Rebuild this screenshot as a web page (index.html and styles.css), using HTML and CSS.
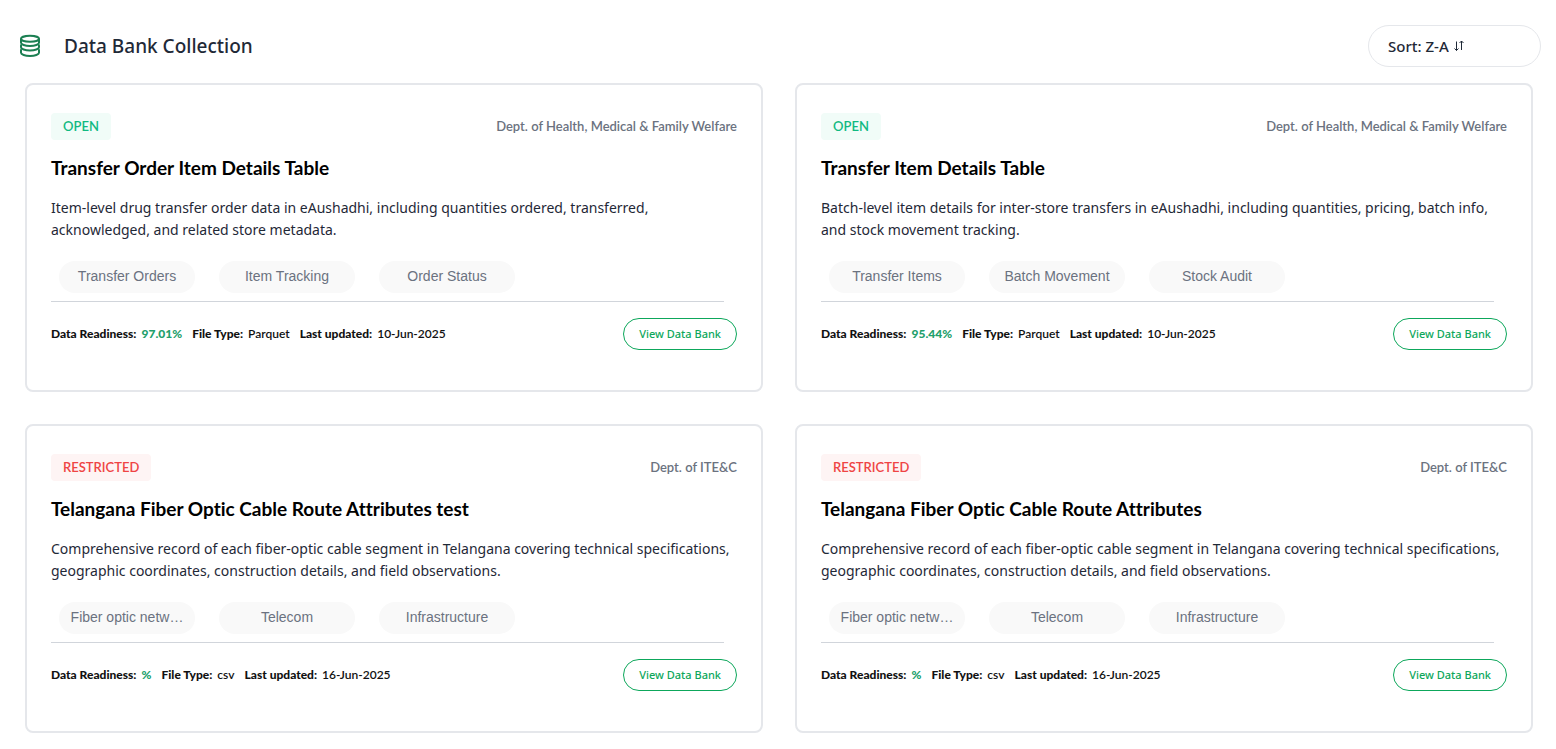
FILE: index.html
```html
<!DOCTYPE html>
<html lang="en">
<head>
<meta charset="utf-8">
<meta name="viewport" content="width=device-width, initial-scale=1">
<title>Data Bank Collection</title>
<link rel="stylesheet" href="styles.css">
</head>
<body>
<header class="page-header">
  <svg class="page-icon" viewBox="0 0 24 24" aria-hidden="true">
    <ellipse cx="12" cy="4.800" rx="9" ry="3"/>
    <path d="M3 4.800v4c0 1.700 4 3.200 9 3.200s9-1.500 9-3.200v-4"/>
    <path d="M3.500 10.500c-.3.400-.5.800-.5 1.300v1.500c0 1.700 4 3.200 9 3.200s9-1.500 9-3.200v-1.500c0-.5-.2-.9-.5-1.300"/>
    <path d="M3.500 15.200c-.3.400-.5.800-.5 1.300v2.300c0 1.700 4 3.200 9 3.200s9-1.500 9-3.200v-2.300c0-.5-.2-.9-.5-1.300"/>
  </svg>
  <h1 class="page-title">Data Bank Collection</h1>
  <label class="sort">
    <select class="sort-select" aria-label="Sort order">
      <option>Sort: Z-A</option>
      <option>Sort: A-Z</option>
    </select>
    <svg class="sort-icon" viewBox="0 0 12 12" aria-hidden="true">
      <path d="M3.500 1.500v9M1.500 8.500l2 2 2-2M8.500 10V1M6.500 3l2-2 2 2"/>
    </svg>
  </label>
</header>
<main class="cards">
  <article class="card">
    <div class="card-top"><span class="badge badge-open">OPEN</span><span class="dept">Dept. of Health, Medical &amp; Family Welfare</span></div>
    <h2 class="card-title">Transfer Order Item Details Table</h2>
    <p class="desc">Item-level drug transfer order data in eAushadhi, including quantities ordered, transferred, acknowledged, and related store metadata.</p>
    <ul class="tags"><li class="tag">Transfer Orders</li><li class="tag">Item Tracking</li><li class="tag">Order Status</li></ul>
    <div class="card-foot">
      <div class="meta"><span class="meta-item"><b>Data Readiness:</b><b class="ready">97.01%</b></span><span class="meta-item"><b>File Type:</b><span>Parquet</span></span><span class="meta-item"><b>Last updated:</b><span>10-Jun-2025</span></span></div>
      <button class="view" type="button">View Data Bank</button>
    </div>
  </article>
  <article class="card">
    <div class="card-top"><span class="badge badge-open">OPEN</span><span class="dept">Dept. of Health, Medical &amp; Family Welfare</span></div>
    <h2 class="card-title">Transfer Item Details Table</h2>
    <p class="desc">Batch-level item details for inter-store transfers in eAushadhi, including quantities, pricing, batch info, and stock movement tracking.</p>
    <ul class="tags"><li class="tag">Transfer Items</li><li class="tag">Batch Movement</li><li class="tag">Stock Audit</li></ul>
    <div class="card-foot">
      <div class="meta"><span class="meta-item"><b>Data Readiness:</b><b class="ready">95.44%</b></span><span class="meta-item"><b>File Type:</b><span>Parquet</span></span><span class="meta-item"><b>Last updated:</b><span>10-Jun-2025</span></span></div>
      <button class="view" type="button">View Data Bank</button>
    </div>
  </article>
  <article class="card">
    <div class="card-top"><span class="badge badge-restricted">RESTRICTED</span><span class="dept">Dept. of ITE&amp;C</span></div>
    <h2 class="card-title">Telangana Fiber Optic Cable Route Attributes test</h2>
    <p class="desc">Comprehensive record of each fiber-optic cable segment in Telangana covering technical specifications, geographic coordinates, construction details, and field observations.</p>
    <ul class="tags"><li class="tag">Fiber optic netw…</li><li class="tag">Telecom</li><li class="tag">Infrastructure</li></ul>
    <div class="card-foot">
      <div class="meta"><span class="meta-item"><b>Data Readiness:</b><b class="ready">%</b></span><span class="meta-item"><b>File Type:</b><span>csv</span></span><span class="meta-item"><b>Last updated:</b><span>16-Jun-2025</span></span></div>
      <button class="view" type="button">View Data Bank</button>
    </div>
  </article>
  <article class="card">
    <div class="card-top"><span class="badge badge-restricted">RESTRICTED</span><span class="dept">Dept. of ITE&amp;C</span></div>
    <h2 class="card-title">Telangana Fiber Optic Cable Route Attributes</h2>
    <p class="desc">Comprehensive record of each fiber-optic cable segment in Telangana covering technical specifications, geographic coordinates, construction details, and field observations.</p>
    <ul class="tags"><li class="tag">Fiber optic netw…</li><li class="tag">Telecom</li><li class="tag">Infrastructure</li></ul>
    <div class="card-foot">
      <div class="meta"><span class="meta-item"><b>Data Readiness:</b><b class="ready">%</b></span><span class="meta-item"><b>File Type:</b><span>csv</span></span><span class="meta-item"><b>Last updated:</b><span>16-Jun-2025</span></span></div>
      <button class="view" type="button">View Data Bank</button>
    </div>
  </article>
</main>
</body>
</html>
```
FILE: styles.css
```css
* { box-sizing: border-box; }

body {
  margin: 0;
  background: #fff;
  color: #1f2937;
  font-family: "Noto Sans", "Open Sans", sans-serif;
}

.page-header {
  display: flex;
  align-items: center;
  padding: 25px 15px 16px 18px;
}

.page-icon {
  width: 24px;
  height: 24px;
  fill: none;
  stroke: #1b7f52;
  stroke-width: 2;
}

.page-title {
  flex: 1;
  margin: 0 0 0 22px;
  font-size: 19px;
  font-weight: 500;
  line-height: 28px;
}

.sort {
  display: flex;
  align-items: center;
  gap: 4px;
  width: 173px;
  height: 42px;
  padding: 0 19px;
  border: 1px solid #e5e7eb;
  border-radius: 21px;
}

.sort-select {
  appearance: none;
  padding: 0;
  border: 0;
  background: none;
  color: #1f2937;
  font: 500 15px/24px "Noto Sans", "Open Sans", sans-serif;
}

.sort-icon {
  width: 12px;
  height: 12px;
  fill: none;
  stroke: #1f2937;
  stroke-width: 1;
}

.cards {
  display: grid;
  grid-template-columns: 1fr 1fr;
  gap: 32px;
  padding: 0 23px 16px 25px;
}

.card {
  padding: 28px 24px 40px;
  border: 2px solid #e5e7eb;
  border-radius: 8px;
}

.card-top {
  display: flex;
  align-items: center;
  justify-content: space-between;
}

.badge {
  padding: 0 12px;
  border-radius: 4px;
  font: 600 13px/27px Lato, sans-serif;
}

.badge-open { background: #f1fcf8; color: #10b981; }
.badge-restricted { background: #fef4f4; color: #ef4444; }

.dept {
  color: #6b7280;
  font: 600 13px/27px Lato, sans-serif;
}

.card-title {
  margin: 14px 0 16px;
  color: #000;
  font: 700 19px/27px Lato, sans-serif;
  font-variant-ligatures: none;
}

.desc {
  margin: 0;
  font-size: 14px;
  line-height: 22px;
}

.tags {
  display: flex;
  gap: 24px;
  margin: 20px 13px 0 0;
  padding: 0 8px 8px;
  border-bottom: 1px solid #d1d5db;
  list-style: none;
}

.tag {
  width: 136px;
  border-radius: 16px;
  background: #f9f9f9;
  color: #6b7280;
  font: 14px/30px "Liberation Sans", Arial, sans-serif;
  height: 32px;
  text-align: center;
}

.card-foot {
  display: flex;
  align-items: center;
  justify-content: space-between;
  margin-top: 16px;
}

.meta {
  display: flex;
  gap: 10px;
  color: #111;
  font: 600 12px/18px Lato, sans-serif;
}

.meta-item {
  display: flex;
  gap: 5px;
}

.ready { color: #22a06b; }

.view {
  height: 32px;
  padding: 0 15px;
  border: 1px solid #0da75b;
  border-radius: 16px;
  background: #fff;
  color: #0da75b;
  font: 500 11px/16px "Noto Sans", "Open Sans", sans-serif;
}
```
